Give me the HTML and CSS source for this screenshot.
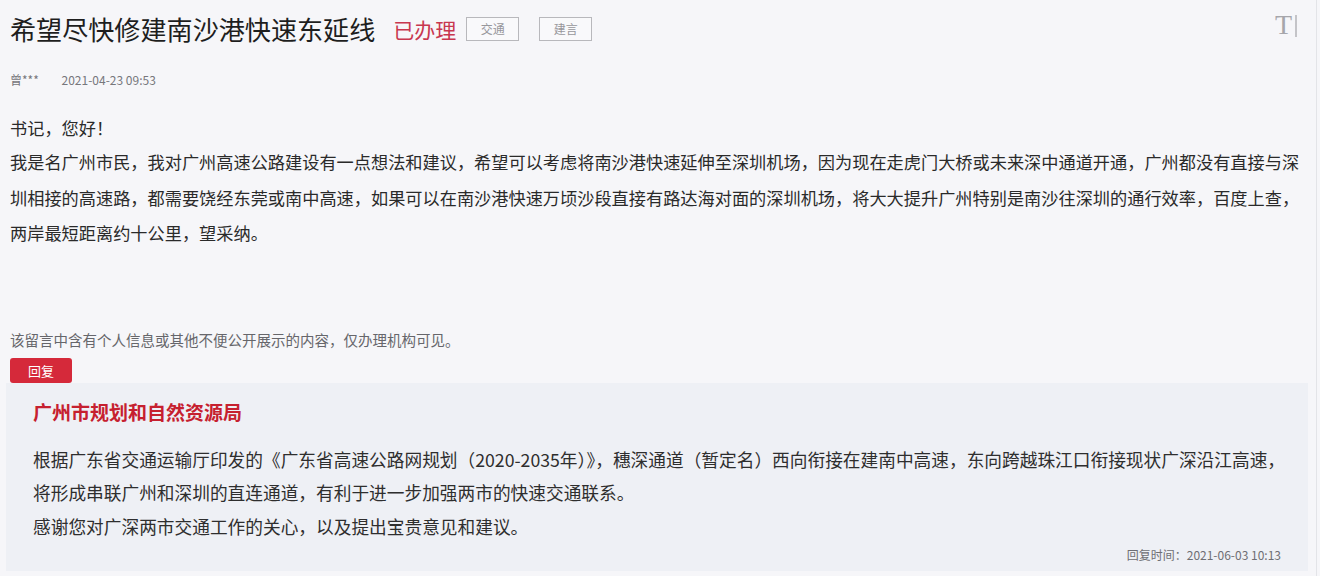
FILE: index.html
```html
<!DOCTYPE html>
<html lang="zh-CN">
<head>
    <meta charset="UTF-8">
    <meta name="viewport" content="width=device-width, initial-scale=1.0">
    <title>希望尽快修建南沙港快速东延线</title>
    <link rel="stylesheet" href="styles.css">
</head>
<body>
    <div class="page">
        <div class="header">
            <h1 class="title">希望尽快修建南沙港快速东延线</h1>
            <span class="status">已办理</span>
            <span class="tag">交通</span>
            <span class="tag tag-last">建言</span>
            <span class="font-toggle">T<span class="bar"></span></span>
        </div>

        <div class="meta">
            <span class="author">曾***</span>
            <span class="date">2021-04-23 09:53</span>
        </div>

        <p class="greeting">书记，您好！</p>
        <p class="content">我是名广州市民，我对广州高速公路建设有一点想法和建议，希望可以考虑将南沙港快速延伸至深圳机场，因为现在走虎门大桥或未来深中通道开通，广州都没有直接与深<br>圳相接的高速路，都需要饶经东莞或南中高速，如果可以在南沙港快速万顷沙段直接有路达海对面的深圳机场，将大大提升广州特别是南沙往深圳的通行效率，百度上查，<br>两岸最短距离约十公里，望采纳。</p>

        <p class="notice">该留言中含有个人信息或其他不便公开展示的内容，仅办理机构可见。</p>
        <span class="reply-badge">回复</span>

        <div class="reply">
            <div class="org">广州市规划和自然资源局</div>
            <p class="reply-text">根据广东省交通运输厅印发的《广东省高速公路网规划（2020-2035年）》，穗深通道（暂定名）西向衔接在建南中高速，东向跨越珠江口衔接现状广深沿江高速，<br>将形成串联广州和深圳的直连通道，有利于进一步加强两市的快速交通联系。<br>感谢您对广深两市交通工作的关心，以及提出宝贵意见和建议。</p>
            <div class="reply-time">回复时间：2021-06-03 10:13</div>
        </div>
    </div>
</body>
</html>
```

FILE: styles.css
```css
/* message detail page */
body {
    margin: 0;
    background-color: #f6f6f9;
    font-family: "Noto Sans CJK SC", "Noto Sans", sans-serif;
    color: #333;
}

.page {
    height: 576px;
    box-sizing: border-box;
    padding: 0 10px 0 10px;
    border-right: 1px solid #e3e4e8;
    margin-right: 3px;
}

.header {
    display: flex;
    align-items: center;
    padding-top: 11px;
    height: 36px;
}

.title {
    margin: 0;
    font-size: 26.1px;
    font-weight: normal;
    line-height: 36px;
    color: #1e1e1e;
}

.status {
    margin-left: 18px;
    font-size: 21px;
    color: #c8374f;
}

.tag {
    margin-left: 10px;
    width: 51px;
    height: 22px;
    border: 1px solid #b8b8bc;
    font-size: 12px;
    line-height: 22px;
    text-align: center;
    color: #97979c;
    background-color: #f9f9fb;
}

.tag-last {
    margin-left: 20px;
}

.font-toggle {
    margin-left: auto;
    margin-right: 9px;
    align-self: flex-start;
    margin-top: -2px;
    font-family: "Liberation Serif", serif;
    font-size: 28px;
    color: #a6a6ab;
    display: flex;
    align-items: flex-start;
}

.font-toggle .bar {
    width: 2px;
    height: 22px;
    margin-top: 6px;
    margin-left: 3px;
    background-color: #c4c4c8;
}

.meta {
    margin-top: 23px;
    font-size: 12px;
    line-height: 20px;
    color: #77777c;
}

.date {
    margin-left: 20px;
}

.greeting {
    margin: 22px 0 0;
    font-size: 17.2px;
    line-height: 32px;
    color: #2a2a2a;
}

.content {
    margin: 0;
    font-size: 17.2px;
    line-height: 35.5px;
    color: #2a2a2a;
    white-space: nowrap;
}

.notice {
    margin: 78px 0 0;
    font-size: 14.5px;
    line-height: 22px;
    color: #66666b;
}

.reply-badge {
    display: inline-block;
    margin-top: 7px;
    width: 62px;
    height: 25px;
    border-radius: 3px;
    background-color: #d5293a;
    color: #fff;
    font-size: 13px;
    line-height: 25px;
    text-align: center;
    vertical-align: top;
}

.reply {
    margin: 0 -2px 0 -4px;
    padding: 15px 27px 7px 27px;
    background-color: #eef0f5;
}

.org {
    font-size: 19px;
    font-weight: bold;
    line-height: 28px;
    color: #c6202f;
}

.reply-text {
    margin: 17px 0 0;
    font-size: 17.7px;
    line-height: 33.5px;
    color: #2e2e2e;
    white-space: nowrap;
}

.reply-time {
    margin-top: 3px;
    text-align: right;
    font-size: 12px;
    line-height: 18px;
    color: #6e6e73;
}
```
